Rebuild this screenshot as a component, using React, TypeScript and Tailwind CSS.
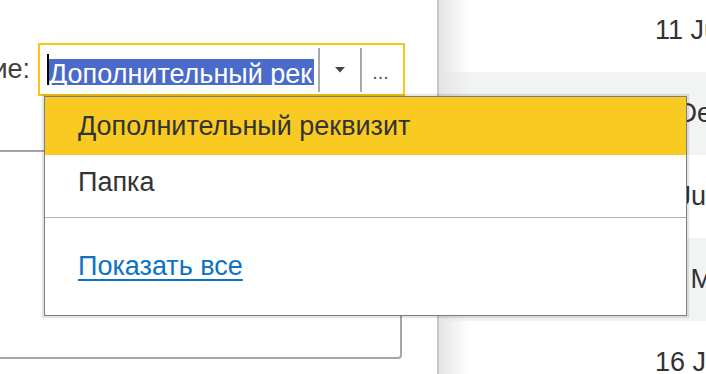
import React from 'react'

const rows = [
    { text: '11 Jun', gray: false },
    { text: '1 Dec', gray: true },
    { text: '1 Jun', gray: false },
    { text: '11 Mar', gray: true },
    { text: '16 Jun', gray: false },
]

const App = () => {
    return (
        <div className="relative flex w-[706px] h-[374px] overflow-hidden bg-white text-[#333333] font-['Liberation_Sans',Arial,sans-serif] text-[27px]">
            {/* left form */}
            <div className="w-[437px] shrink-0 bg-white pt-[43px]">
                <div className="flex items-center h-[53px]">
                    <div className="flex justify-end w-[38px] pr-[8px] overflow-hidden">
                        <span className="whitespace-nowrap leading-[31px] text-[#404040]">Наименование:</span>
                    </div>
                    <div className="flex items-center w-[367px] h-[53px] border-2 border-[#f8c912] bg-white pl-[7px]">
                        <div className="w-[2px] h-[31px] bg-black" />
                        <div className="w-[265px] h-[31px] overflow-hidden">
                            <span className="inline-block whitespace-nowrap leading-[31px] bg-[#4b6bcb] text-white">Дополнительный реквизит</span>
                        </div>
                        <div className="ml-[4px] w-[2px] h-[44px] bg-[#a9a9a9]" />
                        <div className="flex items-center justify-center w-[40px] h-full">
                            <svg width="10" height="6" viewBox="0 0 10 6">
                                <path d="M0 0 L10 0 L5 5.5 Z" fill="#444444" />
                            </svg>
                        </div>
                        <div className="w-[2px] h-[44px] bg-[#a9a9a9]" />
                        <div className="flex items-end justify-center flex-1 h-full pb-[12px] pr-[4px] text-[20px] leading-none text-[#555555]">
                            ...
                        </div>
                    </div>
                </div>
                <div className="mt-[54px] -ml-[4px] w-[406px] h-[209px] border-2 border-[#a6a6a6] rounded-[4px]" />
            </div>

            {/* right list */}
            <div className="relative flex-1 flex flex-col -mt-[11px]">
                {rows.map((r, i) => (
                    <div key={i} className={`flex items-center shrink-0 h-[83px] pl-[218px] whitespace-nowrap ${r.gray ? 'bg-[#f2f3f3]' : 'bg-white'}`}>
                        {r.text}
                    </div>
                ))}
                <div className="absolute inset-y-0 left-0 w-[32px] border-l-2 border-[#c6c6c6] bg-gradient-to-r from-[#e4e4e4] to-transparent" />
            </div>

            {/* dropdown popup */}
            <div className="absolute left-[44px] top-[96px] w-[643px] h-[220px] flex flex-col bg-white border border-[#7d7d7d] shadow-[0_0_1px_2px_rgba(0,0,0,0.1)]">
                <div className="flex items-center h-[58px] shrink-0 bg-[#f9cb22] pl-[33px]">Дополнительный реквизит</div>
                <div className="flex items-center h-[54px] shrink-0 pl-[33px]">Папка</div>
                <div className="mt-[8px] h-px bg-[#b3b3b3]" />
                <div className="flex items-center flex-1 pl-[33px]">
                    <a href="#" className="text-[#0d72c1] underline decoration-2 underline-offset-[4px]">Показать все</a>
                </div>
            </div>
        </div>
    )
}

export default App
